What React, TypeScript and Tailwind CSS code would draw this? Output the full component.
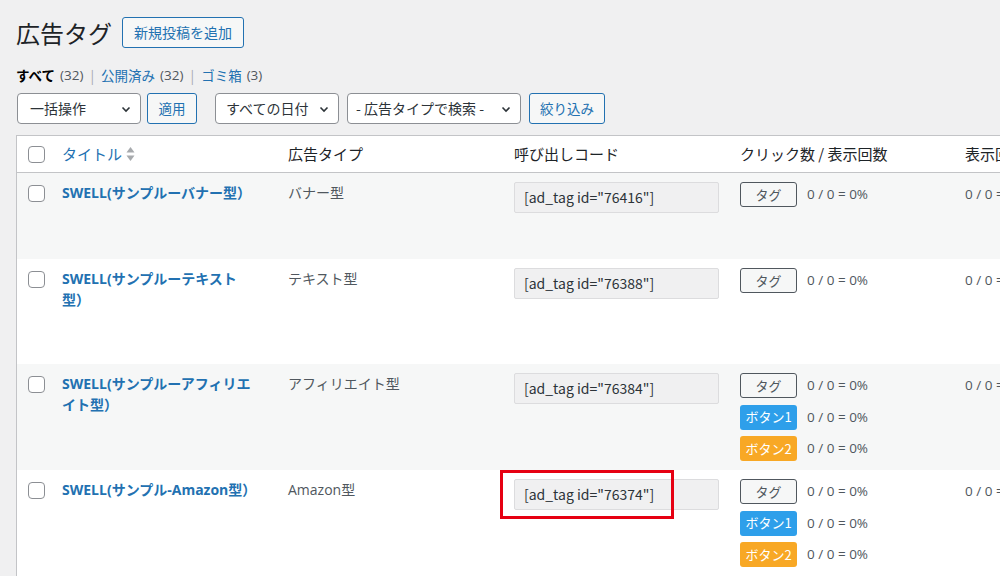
import React from "react";

const FONT = { fontFamily: '"Noto Sans CJK JP", "Noto Sans", sans-serif' };
const LATIN = { fontFamily: '"Open Sans", "Noto Sans CJK JP", sans-serif' };

function Chevron() {
  return (
    <svg width="12" height="12" viewBox="0 0 12 12" className="shrink-0">
      <path d="M2.5 4.5 L6 8 L9.5 4.5" fill="none" stroke="#2c3338" strokeWidth="1.6" />
    </svg>
  );
}

function Select({ label, w, pl = "pl-3" }: { label: string; w: string; pl?: string }) {
  return (
    <div className={`${w} h-[31px] bg-white border border-[#8c8f94] rounded-[4px] flex items-center justify-between ${pl} pr-2 text-[14px] text-[#2c3338]`}>
      <span>{label}</span>
      <Chevron />
    </div>
  );
}

function OutlineBtn({ label, w }: { label: string; w: string }) {
  return (
    <div className={`${w} h-[31px] bg-[#f6f7f7] border border-[#2271b1] rounded-[3px] flex items-center justify-center text-[13.5px] text-[#2271b1]`}>
      {label}
    </div>
  );
}

function Checkbox() {
  return <div className="w-[17px] h-[17px] bg-white border border-[#8c8f94] rounded-[4px]" />;
}

function Stat({ kind }: { kind: "tag" | "b1" | "b2" }) {
  const badge =
    kind === "tag" ? (
      <div className="w-[57px] h-[25px] bg-[#f6f7f7] border border-[#50575e] rounded-[3px] flex items-center justify-center text-[13px] text-[#50575e]">
        タグ
      </div>
    ) : kind === "b1" ? (
      <div className="w-[57px] h-[25px] bg-[#2e9fea] rounded-[3px] flex items-center justify-center text-[13px] text-white">
        ボタン1
      </div>
    ) : (
      <div className="w-[57px] h-[25px] bg-[#f8a825] rounded-[3px] flex items-center justify-center text-[13px] text-white">
        ボタン2
      </div>
    );
  return (
    <div className="flex items-center gap-[10px] h-[25px]">
      {badge}
      <span style={LATIN} className="text-[13.5px] text-[#50575e]">0 / 0 = 0%</span>
    </div>
  );
}

type Row = {
  title: React.ReactNode;
  type: string;
  id: string;
  buttons: boolean;
  bg: string;
  h: string;
  red?: boolean;
};

const rows: Row[] = [
  { title: "SWELL(サンプルーバナー型）", type: "バナー型", id: "76416", buttons: false, bg: "bg-[#f6f7f7]", h: "h-[86px]" },
  { title: <>SWELL(サンプルーテキスト<br />型）</>, type: "テキスト型", id: "76388", buttons: false, bg: "bg-white", h: "h-[105px]" },
  { title: <>SWELL(サンプルーアフィリエ<br />イト型）</>, type: "アフィリエイト型", id: "76384", buttons: true, bg: "bg-[#f6f7f7]", h: "h-[106px]" },
  { title: "SWELL(サンプル-Amazon型）", type: "Amazon型", id: "76374", buttons: true, bg: "bg-white", h: "h-[106px]", red: true },
];

export default function App() {
  return (
    <div style={FONT} className="w-[1000px] h-[576px] overflow-hidden bg-[#f0f0f1] pl-4 text-[#3c434a]">
      <div className="flex items-center gap-[10px] pt-[17px]">
        <h1 className="text-[24px] leading-[31px] text-[#1d2327] font-normal">広告タグ</h1>
        <div className="h-[31px] px-[11px] bg-[#f6f7f7] border border-[#2271b1] rounded-[3px] flex items-center text-[14px] text-[#2271b1]">
          新規投稿を追加
        </div>
      </div>

      <div className="mt-[18px] h-[18px] flex items-center text-[13.5px] leading-[18px]">
        <span className="font-bold text-black">すべて</span>
        <span style={LATIN} className="ml-[5px] text-[#50575e]">(32)</span>
        <span className="mx-[7px] text-[#a7aaad]">|</span>
        <span className="text-[#2271b1]">公開済み</span>
        <span style={LATIN} className="ml-[5px] text-[#50575e]">(32)</span>
        <span className="mx-[7px] text-[#a7aaad]">|</span>
        <span className="text-[#2271b1]">ゴミ箱</span>
        <span style={LATIN} className="ml-[5px] text-[#50575e]">(3)</span>
      </div>

      <div className="mt-[9px] flex items-center">
        <div className="ml-[1px]"><Select label="一括操作" w="w-[124px]" /></div>
        <div className="ml-[6px]"><OutlineBtn label="適用" w="w-[50px]" /></div>
        <div className="ml-[18px]"><Select label="すべての日付" w="w-[124px]" pl="pl-[10px]" /></div>
        <div className="ml-[8px]"><Select label="- 広告タイプで検索 -" w="w-[174px]" pl="pl-[8px]" /></div>
        <div className="ml-[8px]"><OutlineBtn label="絞り込み" w="w-[76px]" /></div>
      </div>

      <div className="mt-[11px] w-[1200px] border border-[#c3c4c7] bg-white">
        <div className="flex h-[37px] items-center border-b border-[#c3c4c7] text-[15px]">
          <div className="w-[35px] pl-[11px] flex items-center"><Checkbox /></div>
          <div className="w-[226px] pl-[10px] flex items-center gap-[4px] text-[#2271b1]">
            タイトル
            <svg width="9" height="16" viewBox="0 0 9 16">
              <path d="M4.5 1 L8.5 6.5 L0.5 6.5 Z" fill="#a7aaad" />
              <path d="M4.5 15 L8.5 9.5 L0.5 9.5 Z" fill="#a7aaad" />
            </svg>
          </div>
          <div className="w-[226px] pl-[10px] text-[#1d2327]">広告タイプ</div>
          <div className="w-[226px] pl-[10px] text-[#1d2327]">呼び出しコード</div>
          <div className="w-[225px] pl-[10px] text-[#1d2327]">クリック数 / 表示回数</div>
          <div className="w-[226px] pl-[10px] text-[#1d2327]">表示回数</div>
        </div>

        {rows.map((r, i) => (
          <div key={i} className={`flex ${r.bg} ${r.h}`}>
            <div className="w-[35px] pl-[11px] pt-[12px]"><Checkbox /></div>
            <div style={LATIN} className="w-[226px] pl-[10px] pt-[9px] text-[14px] leading-[21px] font-bold text-[#2271b1]">{r.title}</div>
            <div style={LATIN} className="w-[226px] pl-[10px] pt-[9px] text-[14px] leading-[21px] text-[#50575e]">{r.type}</div>
            <div className="w-[226px] pl-[10px] pt-[9px]">
              <div className="relative w-[205px]">
                <div className="w-[205px] h-[31px] bg-[#f0f0f1] border border-[#dcdcde] rounded-[2px] flex items-center pl-[9px] text-[14px] text-[#2c3338]">
                  [ad_tag id="{r.id}"]
                </div>
                {r.red && (
                  <div className="absolute left-[-14px] top-[-9px] w-[174px] h-[49px] border-[3px] border-[#e60012]" />
                )}
              </div>
            </div>
            <div className="w-[225px] pl-[10px] pt-[9px] flex flex-col gap-[6.5px]">
              <Stat kind="tag" />
              {r.buttons && <Stat kind="b1" />}
              {r.buttons && <Stat kind="b2" />}
            </div>
            <div style={LATIN} className="w-[226px] pl-[10px] pt-[9px] h-[25px] box-content flex items-center text-[13.5px] text-[#50575e]">
              0 / 0 = 0%
            </div>
          </div>
        ))}
      </div>
    </div>
  );
}
